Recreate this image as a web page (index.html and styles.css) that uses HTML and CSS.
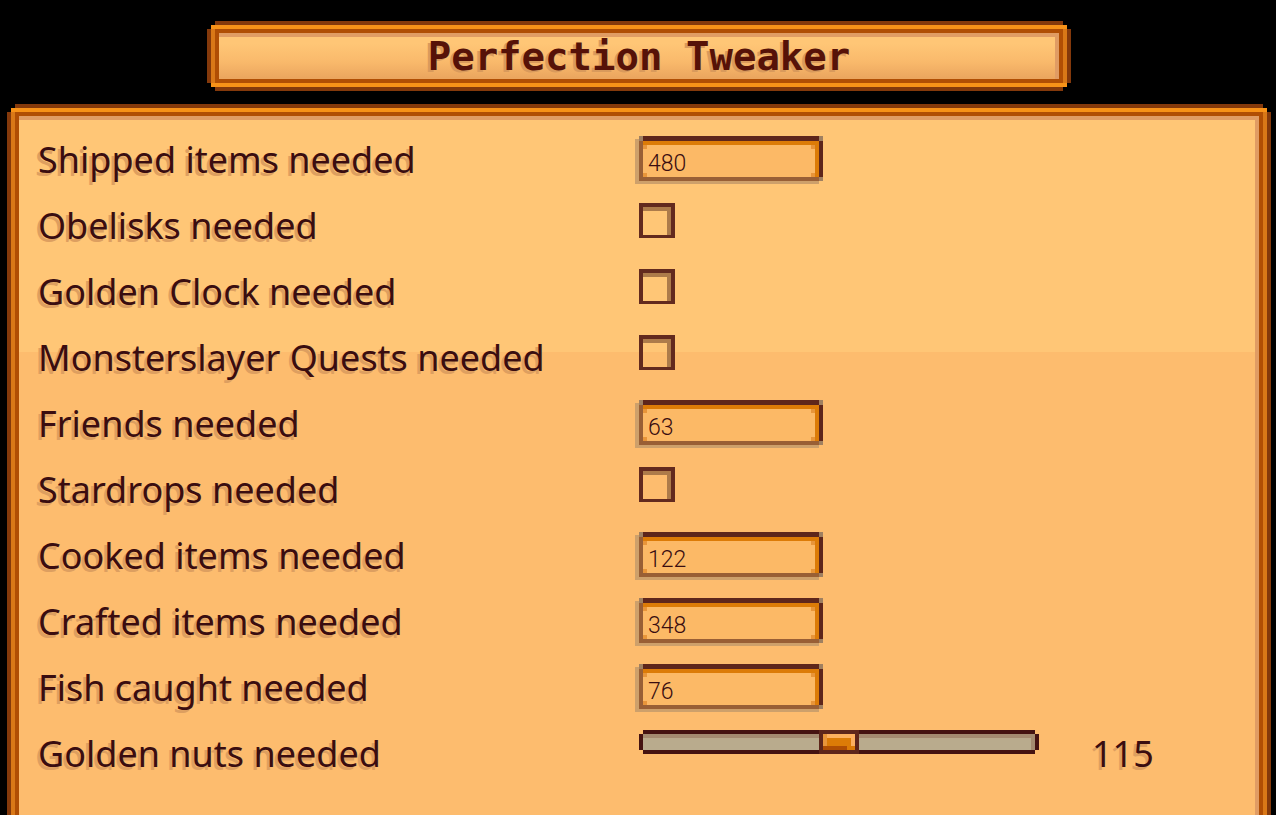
FILE: index.html
```html
<!DOCTYPE html>
<html lang="en">
<head>
  <meta charset="UTF-8" />
  <meta name="viewport" content="width=device-width, initial-scale=1.0"/>
  <title>Perfection Tweaker</title>
  <link rel="stylesheet" href="styles.css">
</head>
<body>
  <h1 class="frame title">Perfection Tweaker</h1>

  <form class="frame panel">
    <div class="row">
      <label for="shipped">Shipped items needed</label>
      <input type="text" class="textbox" id="shipped" value="480" />
    </div>
    <div class="row">
      <label for="obelisks">Obelisks needed</label>
      <input type="checkbox" class="checkbox" id="obelisks" />
    </div>
    <div class="row">
      <label for="clock">Golden Clock needed</label>
      <input type="checkbox" class="checkbox" id="clock" />
    </div>
    <div class="row">
      <label for="monsters">Monsterslayer Quests needed</label>
      <input type="checkbox" class="checkbox" id="monsters" />
    </div>
    <div class="row">
      <label for="friends">Friends needed</label>
      <input type="text" class="textbox" id="friends" value="63" />
    </div>
    <div class="row">
      <label for="stardrops">Stardrops needed</label>
      <input type="checkbox" class="checkbox" id="stardrops" />
    </div>
    <div class="row">
      <label for="cooked">Cooked items needed</label>
      <input type="text" class="textbox" id="cooked" value="122" />
    </div>
    <div class="row">
      <label for="crafted">Crafted items needed</label>
      <input type="text" class="textbox" id="crafted" value="348" />
    </div>
    <div class="row">
      <label for="fish">Fish caught needed</label>
      <input type="text" class="textbox" id="fish" value="76" />
    </div>
    <div class="row">
      <label for="nuts">Golden nuts needed</label>
      <input type="range" class="slider" id="nuts" min="100" max="130" value="115" />
      <output class="value" id="nutsValue" for="nuts">115</output>
    </div>
  </form>

  <script>
    const nuts = document.getElementById("nuts");

    nuts.addEventListener("input", function () {
      document.getElementById("nutsValue").value = nuts.value;
    });
  </script>
</body>
</html>
```
FILE: styles.css
```css
* {
  box-sizing: border-box;
}

body {
  display: flex;
  flex-direction: column;
  min-height: 100vh;
  margin: 0;
  padding: 21px 5px 0 7px;
  background: #000;
  color: #3a0d10;
  font-family: "Noto Sans", sans-serif;
}

/* Wooden frame with stepped corners */
.frame {
  border: 4px solid #84390b;
  box-shadow:
    inset 0 4px #f79218,
    inset 0 -4px #f79218,
    inset 4px 0 #d97817,
    inset -4px 0 #d97817,
    inset 0 0 0 8px #b04e04,
    inset -12px 12px #e09c64;
  clip-path: polygon(
    8px 0, calc(100% - 8px) 0, calc(100% - 8px) 4px, calc(100% - 4px) 4px,
    calc(100% - 4px) 8px, 100% 8px, 100% calc(100% - 8px),
    calc(100% - 4px) calc(100% - 8px), calc(100% - 4px) calc(100% - 4px),
    calc(100% - 8px) calc(100% - 4px), calc(100% - 8px) 100%, 8px 100%,
    8px calc(100% - 4px), 4px calc(100% - 4px), 4px calc(100% - 8px),
    0 calc(100% - 8px), 0 8px, 4px 8px, 4px 4px, 8px 4px);
}

.title {
  align-self: center;
  width: 100%;
  max-width: 864px;
  height: 70px;
  margin: 0 0 13px;
  background: linear-gradient(#ffc676 30%, #f9b96b 60%, #eba65f 85%);
  color: #561208;
  font: bold 39px/64px "DejaVu Sans Mono", monospace;
  text-align: center;
  text-shadow: -3px 2px #d99a5c;
}

.panel {
  flex: 1;
  padding: 28px 27px 0;
  border-bottom: 0;
  background: linear-gradient(#ffc676 244px, #fdbc6e 244px);
  box-shadow:
    inset 0 4px #f79218,
    inset 4px 0 #d97817,
    inset -4px 0 #d97817,
    inset 0 8px #b04e04,
    inset 8px 0 #b04e04,
    inset -8px 0 #b04e04,
    inset -12px 12px #e09c64;
  clip-path: polygon(
    8px 0, calc(100% - 8px) 0, calc(100% - 8px) 4px, calc(100% - 4px) 4px,
    calc(100% - 4px) 8px, 100% 8px, 100% 100%, 0 100%,
    0 8px, 4px 8px, 4px 4px, 8px 4px);
}

.row {
  display: flex;
  align-items: flex-start;
  height: 66px;
}

.row label {
  flex: 0 0 601px;
  font-size: 36px;
  line-height: 48px;
  text-shadow: -3px 3px #dd9f60;
}

input {
  margin: 0;
  appearance: none;
  border-radius: 0;
}

.textbox {
  width: 184px;
  height: 45px;
  padding: 10px 9px 0;
  border: 0;
  background:
    linear-gradient(#a08060, #a08060) 0 0 / 4px 5px,
    linear-gradient(#a08060, #a08060) 100% 0 / 4px 5px,
    linear-gradient(#a08060, #a08060) 100% 100% / 4px 4px,
    linear-gradient(#5e261b, #5e261b) 0 0 / 100% 5px,
    linear-gradient(#5e261b, #5e261b) 100% 0 / 4px 100%,
    linear-gradient(#995f35, #995f35) 0 0 / 4px 100%,
    linear-gradient(#995f35, #995f35) 0 100% / 100% 4px,
    linear-gradient(#dc7b07, #dc7b07) 0 5px / 100% 4px,
    linear-gradient(#dc7b07, #dc7b07) 176px 0 / 4px 100%,
    linear-gradient(#e8953a, #e8953a) 4px 9px / 4px 4px,
    linear-gradient(#e8953a, #e8953a) 172px 9px / 4px 4px,
    linear-gradient(#e8953a, #e8953a) 4px 37px / 4px 4px,
    linear-gradient(#e8953a, #e8953a) 172px 37px / 4px 4px,
    #fcb966;
  background-repeat: no-repeat;
  box-shadow: -4px 3px #cda06b;
  color: #3a0d10;
  font: 300 23px/30px Roboto, sans-serif;
  outline: none;
}

.checkbox {
  width: 36px;
  height: 35px;
  margin-top: 1px;
  border: 4px solid #632a1e;
  border-bottom-width: 3px;
  box-shadow: inset -4px 4px #ad7b4a;
}

.checkbox:checked {
  background: #5aa02c;
}

.slider {
  width: 400px;
  height: 24px;
  border: 0;
  background: #b9ab8d;
  box-shadow:
    inset 0 0 0 4px #451311,
    inset -8px 8px #a48b70;
  clip-path: polygon(
    4px 0, calc(100% - 4px) 0, calc(100% - 4px) 4px, 100% 4px,
    100% calc(100% - 4px), calc(100% - 4px) calc(100% - 4px),
    calc(100% - 4px) 100%, 4px 100%, 4px calc(100% - 4px),
    0 calc(100% - 4px), 0 4px, 4px 4px);
}

.slider::-webkit-slider-thumb {
  appearance: none;
  width: 40px;
  height: 24px;
  border: 4px solid #5e261b;
  background:
    linear-gradient(#dc7b07, #dc7b07) 4px 4px / 24px 8px,
    linear-gradient(#e8953a, #e8953a) 0 0 / 4px 12px,
    linear-gradient(#dc7b07, #dc7b07) 24px 12px / 8px 4px,
    linear-gradient(#b04e04, #b04e04) 0 12px / 24px 4px,
    #fcb060;
  background-repeat: no-repeat;
}

.value {
  margin-left: 53px;
  font-size: 36px;
  line-height: 48px;
  text-shadow: -3px 3px #dd9f60;
}
```
